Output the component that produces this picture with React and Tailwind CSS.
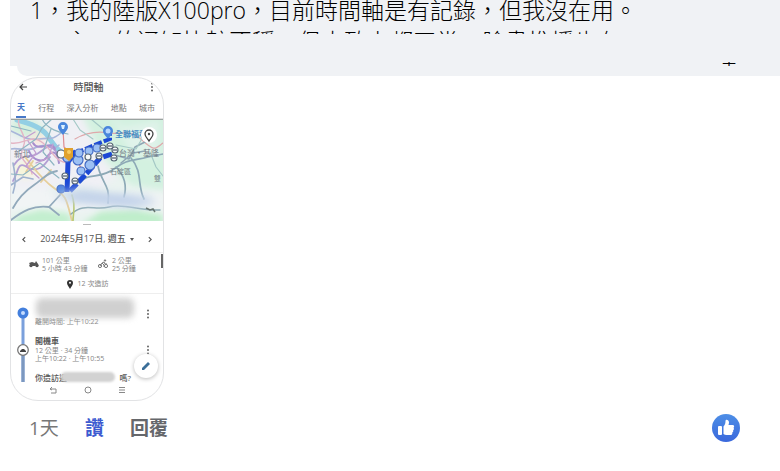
import React from "react";

function Dots() {
  return (
    <svg viewBox="0 0 4 10" className="h-[10px] w-1" fill="#666" aria-hidden="true">
      <circle cx="2" cy="1.5" r="1" />
      <circle cx="2" cy="5" r="1" />
      <circle cx="2" cy="8.5" r="1" />
    </svg>
  );
}

function RouteMap() {
  return (
    <svg viewBox="0 0 152 102" preserveAspectRatio="none" className="block h-[102px] w-full" aria-label="地圖">
      <defs>
        <filter id="haze" x="-30%" y="-80%" width="160%" height="260%">
          <feGaussianBlur stdDeviation="4" />
        </filter>
        <filter id="soft" x="-5%" y="-5%" width="110%" height="110%">
          <feGaussianBlur stdDeviation="0.7" />
        </filter>
        <filter id="relief" x="-10%" y="-10%" width="120%" height="120%">
          <feGaussianBlur stdDeviation="3" />
        </filter>
      </defs>
      <rect width="152" height="102" fill="#eaf3f0" />
      <g filter="url(#relief)">
        <path d="M-5 -5H70L85 30 105 58 90 70 50 65 10 80-5 60Z" fill="#f0f0f5" />
        <path d="M70-5H160V72L120 66 95 42Z" fill="#d3f1e0" />
        <path d="M100 -5L112 8 148 2V40L120 34Z" fill="#e0f3ea" />
        <path d="M0 0H25L38 14 20 22 0 14Z" fill="#d5f0dd" />
        <path d="M4 44L20 42 30 52 16 60 4 56Z" fill="#f6f5da" />
        <path d="M22 12L34 18 30 28 20 24Z" fill="#fae6dc" />
        <path d="M0 70L30 70 60 80 152 74V92H0Z" fill="#f1f4f5" />
        <path d="M70 106L90 92 125 90 152 96V106Z" fill="#bfeecb" />
        <path d="M0 106L8 96 30 90 58 94 62 106Z" fill="#c3efcf" />
      </g>
      <g fill="none" filter="url(#soft)" strokeLinecap="round" strokeLinejoin="round">
        <path d="M6 1C18 4 30 8 36 16S44 30 52 34" stroke="#93cfe4" strokeWidth="5" />
        <path d="M0 12C10 16 16 22 28 20S40 22 50 14M0 30C8 28 16 34 26 28S40 34 48 26" stroke="#a9b6da" strokeWidth="1.6" />
        <path d="M3 46C12 32 18 42 29 33S39 26 52 40M2 62C8 52 6 42 16 48S33 48 39 38" stroke="#b3a0d4" strokeWidth="1.8" />
        <path d="M18 32C22 42 32 44 36 38S46 30 48 44M22 24C28 34 40 20 44 30" stroke="#a88fce" strokeWidth="2" />
        <path d="M0 24C14 26 20 14 32 24S42 42 58 44M8 0C4 8 18 16 12 29S19 43 21 55" stroke="#e4b5c4" strokeWidth="1.4" />
        <path d="M14 38C24 50 30 60 43 69S55 79 61 102M30 63L40 51M22 42L15 53" stroke="#e6cf9b" strokeWidth="1.8" />
        <path d="M2 89C8 78 14 72 23 66S35 54 46 52M0 101C12 92 22 86 38 88L48 96M38 88L49 76" stroke="#92a9bb" strokeWidth="1.8" />
        <path d="M2 44C4 56 6 62 2 74M0 66L12 58 22 60" stroke="#9fb2cf" strokeWidth="1.6" />
        <path d="M52 10L53 28C60 34 65 38 70 49" stroke="#df8c92" strokeWidth="1.2" />
        <path d="M64 20C76 13 86 12 98 14S118 9 131 21 144 30 152 24" stroke="#dfa8aa" strokeWidth="1.2" />
        <path d="M70 63C76 54 90 60 103 50S121 42 137 38L152 35M87 47C90 63 100 67 97 84M105 48C114 57 116 67 113 78M120 39C132 53 126 66 133 80" stroke="#8da9b6" strokeWidth="1.7" />
        <path d="M104 36L118 40 124 28 136 22M110 44L122 34 134 32" stroke="#8fa6b4" strokeWidth="1.6" />
        <path d="M60 95C74 83 83 92 98 88S128 92 149 91" stroke="#8aa8b0" strokeWidth="1.5" />
        <path d="M61 76C65 87 62 94 62 102" stroke="#b9c76f" strokeWidth="1.6" />
        <path d="M31 0C36 10 49 14 57 15M41 0L31 9 25 20 8 32M0 7L20 12M40 10L32 33 43 46M0 55L12 56 29 44 48 59" stroke="#8fb6c2" strokeWidth="1.2" />
        <path d="M62 0L69 11 82 20M80 0L92 10M105 26L125 30 132 18M139 33L145 48 152 57" stroke="#a5c9c6" strokeWidth="1.2" />
        <path d="M17 22L25 34 15 47 28 59M24 13L14 19M42 25L37 39 25 44" stroke="#c39ed0" strokeWidth="1.3" />
      </g>
      <path d="M0 .5H152" stroke="#9aa3a0" />
      <g fontFamily="Noto Sans CJK TC, sans-serif" fill="#727b86" fontSize="8">
        <text x="3" y="38">新北</text>
        <text x="104" y="18" fill="#438bc3" fontWeight="700">全聯福利</text>
        <text x="108" y="37">台灣・基隆</text>
        <text x="99" y="55" fontSize="7">石碇區</text>
        <text x="143" y="62" fontSize="7">雙</text>
      </g>
      <g fill="none" stroke="#1c48d5" filter="url(#soft)">
        <path d="M56 73L57 43 65 32" strokeWidth="5" />
        <path d="M59 72L76 54 89 39 101 35" strokeWidth="5" strokeDasharray="10 2" />
        <path d="M65 34L81 27 99 20 99 14" strokeWidth="4" strokeDasharray="8 2" />
      </g>
      <g fill="#9cc0f4" stroke="#426ac5" strokeWidth="1.2">
        <circle cx="56" cy="39" r="4" />
        <circle cx="67" cy="41" r="5" /><circle cx="68" cy="34" r="4" />
        <circle cx="78" cy="32" r="4" /><circle cx="86" cy="29" r="4" />
        <circle cx="70" cy="52" r="4" /><circle cx="79" cy="46" r="5" />
        <circle cx="50" cy="70" r="4" fill="#4f83df" />
      </g>
      <g fill="#f7fafb" stroke="#596876" strokeWidth="1.2">
        <circle cx="50" cy="35" r="4" />
        <circle cx="77" cy="38" r="3" /><circle cx="88" cy="37" r="3" />
        <circle cx="92" cy="29" r="3" /><circle cx="99" cy="27" r="3" />
        <circle cx="104" cy="31" r="3" /><circle cx="103" cy="39" r="3" />
        <circle cx="54" cy="57" r="3" /><circle cx="64" cy="62" r="3" />
      </g>
      <path d="M90 29h4M97 27h4M102 31h4M101 39h4M86 37h4M62 62h4M52 57h4" stroke="#26374a" strokeWidth="1.2" />
      <path d="M53 29H62V38L58 42 53 38Z" fill="#e0a12e" />
      <circle cx="58" cy="33" r="2" fill="#f7cc61" />
      <g fill="#4a86dc">
        <path d="M47 8a5 5 0 1 1 10 0c0 3-3 5-5 8-2-3-5-5-5-8Z" />
        <path d="M92 12a5 5 0 1 1 10 0c0 3-3 5-5 8-2-3-5-5-5-8Z" />
      </g>
      <path d="M50 6h4l-1 4h-2Z" fill="#dcefff" />
      <circle cx="97" cy="12" r="2.500" fill="#b8d8ff" />
      <path d="M42 76L72 70 100 75 138 78 146 84 125 88 62 83Z" fill="#c6d5ea" filter="url(#haze)" />
      <path d="M62 77L112 78 135 83 111 84 63 80Z" fill="#becfe9" filter="url(#haze)" />
      <path d="M135 89l4 2 3-1 2 3" stroke="#65736e" fill="none" strokeWidth="1.5" />
      <circle cx="138" cy="16" r="8" fill="#fff" />
      <path d="M134 15a4 4 0 0 1 8 0c0 3-3 5-4 7-1-2-4-4-4-7Z" fill="none" stroke="#444" strokeWidth="1.3" />
      <circle cx="138" cy="15" r="1.2" fill="#444" />
    </svg>
  );
}

function PhoneShot() {
  return (
    <div className="relative ml-[10px] mt-px flex h-[324px] w-[154px] flex-col overflow-hidden rounded-[28px] border border-[#e2e3e5] bg-white text-[7px] leading-2 text-[#858585]">
      <header className="flex h-5 items-center justify-between pb-[2px] pl-2 pr-[9px]">
        <button aria-label="返回">
          <svg viewBox="0 0 8 8" className="h-2 w-2" fill="none" stroke="#444" strokeWidth="1.2"><path d="M8 4H1M4 1L1 4l3 3" /></svg>
        </button>
        <h2 className="text-[10px] font-medium leading-4 text-[#555]">時間軸</h2>
        <button aria-label="更多"><Dots /></button>
      </header>
      <nav className="flex h-[21px] items-stretch justify-between border-b border-[#dedede] pl-[5px] pr-2 text-[8px] text-[#777]">
        <button className="border-b-2 border-[#4778c7] px-px font-bold text-[#4778c7]">天</button>
        <button>行程</button>
        <button>深入分析</button>
        <button>地點</button>
        <button>城市</button>
      </nav>
      <RouteMap />
      <div className="mx-auto mt-[3px] h-px w-2 bg-[#bbb]" />
      <div className="flex h-7 items-center justify-between border-b border-[#eee] px-[11px] pt-px text-[#555]">
        <button aria-label="前一天"><svg viewBox="0 0 5 8" className="h-[7px] w-1" fill="none" stroke="#555" strokeWidth="1.4"><path d="M4 1L1 4l3 3" /></svg></button>
        <button className="flex items-center gap-1 whitespace-nowrap text-[9px] font-medium">2024年5月17日, 週五
          <svg viewBox="0 0 4 3" className="h-[3px] w-1" fill="#555"><path d="M0 0h4L2 3Z" /></svg>
        </button>
        <button aria-label="後一天"><svg viewBox="0 0 5 8" className="h-[7px] w-1" fill="none" stroke="#555" strokeWidth="1.4"><path d="M1 1l3 3-3 3" /></svg></button>
      </div>
      <section className="h-[41px] border-b border-[#eee] pt-1">
        <div className="flex pl-[18px]">
          <svg viewBox="0 0 10 8" className="mt-[3px] h-2 w-[10px]" fill="#555"><circle cx="2" cy="5.5" r="1.7" /><circle cx="8" cy="5.5" r="1.7" /><path d="M0 3l3-1 3 1 1-2 2 3-3 2H2Z" /></svg>
          <p className="ml-[3px] w-[56px] whitespace-nowrap">101 公里<br />5 小時 43 分鐘</p>
          <svg viewBox="0 0 10 10" className="mt-[2px] h-[10px] w-[10px]" fill="none" stroke="#777"><circle cx="2" cy="7" r="1.6" /><circle cx="8" cy="7" r="1.6" /><path d="M2 7l2-3 2 2v2M4 4l2-1 1 2h2" /><circle cx="7" cy="1.5" r=".7" fill="#777" /></svg>
          <p className="ml-1 whitespace-nowrap">2 公里<br />25 分鐘</p>
        </div>
        <div className="mt-[6px] flex items-center justify-center gap-1">
          <svg viewBox="0 0 8 10" className="h-[10px] w-2"><path d="M1 4a3 3 0 0 1 6 0c0 2-2 4-3 6-1-2-3-4-3-6Z" fill="#333" /><circle cx="4" cy="3.7" r="1" fill="#fff" /></svg>
          <span>12 次造訪</span>
        </div>
      </section>
      <section className="relative flex h-[90px] shrink-0 pl-[5px]">
        <svg viewBox="0 0 14 90" className="h-[90px] w-[14px] shrink-0" aria-hidden="true">
          <path d="M7 20V88" stroke="#7ba0dc" strokeWidth="3" />
          <path d="M7 58V88" stroke="#7c98bf" strokeWidth="3" />
          <circle cx="7" cy="19" r="5.5" fill="#437fdd" /><circle cx="7" cy="19" r="2" fill="#c5dcff" />
          <circle cx="7" cy="56" r="5.3" fill="#fff" stroke="#777" strokeWidth="1.3" />
          <path d="M4 57l2-2h2l2 2v1H4Z" fill="#444" />
        </svg>
        <div className="ml-[5px] flex-1 whitespace-nowrap pt-6">
          <p>離開時間: 上午10:22</p>
          <h3 className="mt-[11px] text-[8px] font-bold text-[#555]">開機車</h3>
          <p className="mt-[2px]">12 公里 · 34 分鐘</p>
          <p>上午10:22 · 上午10:55</p>
          <p className="mt-[11px] flex justify-between pr-8 text-[8px] font-medium text-[#555]"><span>你造訪過</span><span>嗎?</span></p>
        </div>
        <div className="absolute left-[25px] top-1 h-5 w-[98px] rounded-md bg-[#d0d0d0] blur-[3px]" />
        <div className="absolute left-[50px] top-[78px] h-[10px] w-[54px] rounded-md bg-[#d2d2d2] blur-[1px]" />
        <div className="absolute right-[13px] top-[15px]"><Dots /></div>
        <div className="absolute right-[13px] top-[51px]"><Dots /></div>
        <button aria-label="編輯" className="absolute right-[5px] top-[60px] flex h-6 w-6 items-center justify-center rounded-full bg-white shadow-[0_1px_4px_#bbb]">
          <svg viewBox="0 0 10 10" className="h-[10px] w-[10px]" fill="#3b6e98"><path d="M1 7L7 1l2 2-6 6H1Z" /></svg>
        </button>
      </section>
      <div className="flex h-3 items-center justify-between pl-[38px] pr-[37px]">
        <button aria-label="上一頁"><svg viewBox="0 0 8 8" className="h-2 w-2" fill="none" stroke="#888"><path d="M3 1L1 3l2 1M1 3h6v4H2" /></svg></button>
        <button aria-label="主畫面"><svg viewBox="0 0 8 8" className="h-2 w-2" fill="none" stroke="#888"><circle cx="4" cy="4" r="3" /></svg></button>
        <button aria-label="選單"><svg viewBox="0 0 8 8" className="h-2 w-2" fill="none" stroke="#888"><path d="M1 1.5h6M1 4h6M1 6.5h6" /></svg></button>
      </div>
      <div className="absolute right-0 top-[176px] h-[14px] w-[2px] bg-[#666]" />
    </div>
  );
}

export default function App() {
  return (
    <main className="bg-white font-['Open_Sans','Noto_Sans_CJK_TC',sans-serif]">
      <div className="ml-[10px]">
        <div className="flex h-[66px] items-end justify-between bg-[#f0f2f5] pl-5 pr-[44px] text-black">
          <div className="h-[66px]">
            <div className="-mt-[6px] h-10 overflow-hidden whitespace-nowrap text-[23px] font-light leading-8">
              <p>1，我的陸版X100pro，目前時間軸是有記錄，但我沒在用。</p>
              <p className="-mt-px flex pl-9">
                <span className="mr-[25px]">主</span>
                <span>的通知比較不穩，但大致上都正常，臉書推播也有</span>
              </p>
            </div>
          </div>
          <span className="flex h-1 items-center overflow-hidden text-[14px] leading-4">十</span>
        </div>
        <div className="ml-[7px] h-[10px] rounded-bl-[14px] bg-[#f0f2f5]" />
      </div>
      <PhoneShot />
      <footer className="flex h-[54px] items-center pl-[29px] pr-10 text-[19px] leading-6 text-[#65676b]">
        <a href="#time" className="text-[#777]">1天</a>
        <button className="ml-[26px] font-bold text-[#3d5bd0]">讚</button>
        <button className="ml-[26px] font-bold">回覆</button>
        <button aria-label="讚的人數" className="ml-auto">
          <svg viewBox="0 0 28 28" className="h-7 w-7">
            <defs><linearGradient id="like" x2="0" y2="1"><stop stopColor="#4d8ee6" /><stop offset="1" stopColor="#3a68dc" /></linearGradient></defs>
            <circle cx="14" cy="14" r="14" fill="url(#like)" />
            <rect x="6" y="12" width="4" height="9" rx="1" fill="#fff" />
            <path d="M11.500 12.500C13 11 13.500 9 13.500 7c0-2 3.500-1.500 3.500 1.500 0 1-.5 2-.5 2.500h4c2 0 2 2 1 2.700.8.8.6 2-.4 2.500.5.9.1 1.800-.8 2.200.4 1.400-.4 2.600-2 2.600h-3.800c-1.200 0-2-.4-3-1Z" fill="#fff" />
          </svg>
        </button>
      </footer>
    </main>
  );
}
